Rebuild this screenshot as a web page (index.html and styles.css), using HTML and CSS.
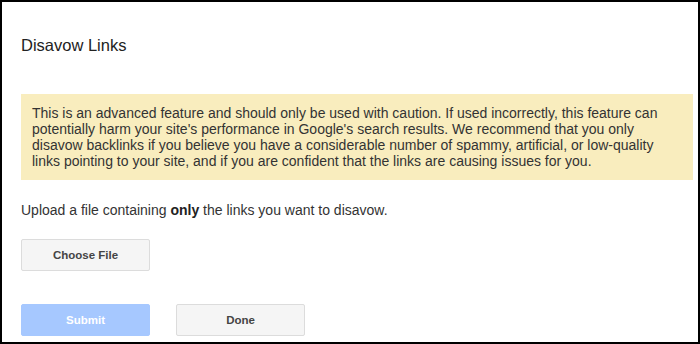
FILE: index.html
```html
<!DOCTYPE html>
<html lang="en">
<head>
    <meta charset="UTF-8">
    <title>Disavow Links</title>
    <link rel="stylesheet" href="styles.css">
</head>
<body>
    <div class="dialog">
        <h1 class="dialog-title">Disavow Links</h1>

        <div class="warning">
            This is an advanced feature and should only be used with caution. If used incorrectly, this feature can
            potentially harm your site's performance in Google's search results. We recommend that you only
            disavow backlinks if you believe you have a considerable number of spammy, artificial, or low-quality
            links pointing to your site, and if you are confident that the links are causing issues for you.
        </div>

        <p class="upload-note">Upload a file containing <b>only</b> the links you want to disavow.</p>

        <div class="file-row">
            <button type="button" class="btn">Choose File</button>
        </div>

        <div class="actions">
            <button type="button" class="btn btn-primary" disabled>Submit</button>
            <button type="button" class="btn">Done</button>
        </div>
    </div>
</body>
</html>
```

FILE: styles.css
```css
* {
    margin: 0;
    padding: 0;
    box-sizing: border-box;
}

html, body {
    height: 100%;
}

body {
    font-family: Arial, "Liberation Sans", sans-serif;
    color: #222;
    background: #fff;
}

.dialog {
    height: 100%;
    border: 2px solid #000;
    padding: 33px 5px 0 19px;
}

.dialog-title {
    font-size: 16.5px;
    font-weight: normal;
    line-height: 20px;
    color: #222;
}

.warning {
    margin-top: 39px;
    background: #f9edbe;
    padding: 11px;
    font-size: 14px;
    line-height: 16px;
    color: #333;
}

.upload-note {
    margin-top: 22px;
    font-size: 14px;
    line-height: 16px;
    color: #333;
}

.upload-note b {
    color: #222;
}

.file-row {
    margin-top: 21px;
}

.actions {
    margin-top: 33px;
    display: flex;
    gap: 26px;
}

.btn {
    width: 129px;
    height: 32px;
    font-family: Arial, "Liberation Sans", sans-serif;
    font-size: 11.5px;
    font-weight: bold;
    color: #444;
    background: #f5f5f5;
    border: 1px solid #dcdcdc;
    border-radius: 2px;
    cursor: pointer;
}

.btn-primary {
    background: #a6c8ff;
    border-color: #a6c8ff;
    color: #fff;
    cursor: default;
}
```
